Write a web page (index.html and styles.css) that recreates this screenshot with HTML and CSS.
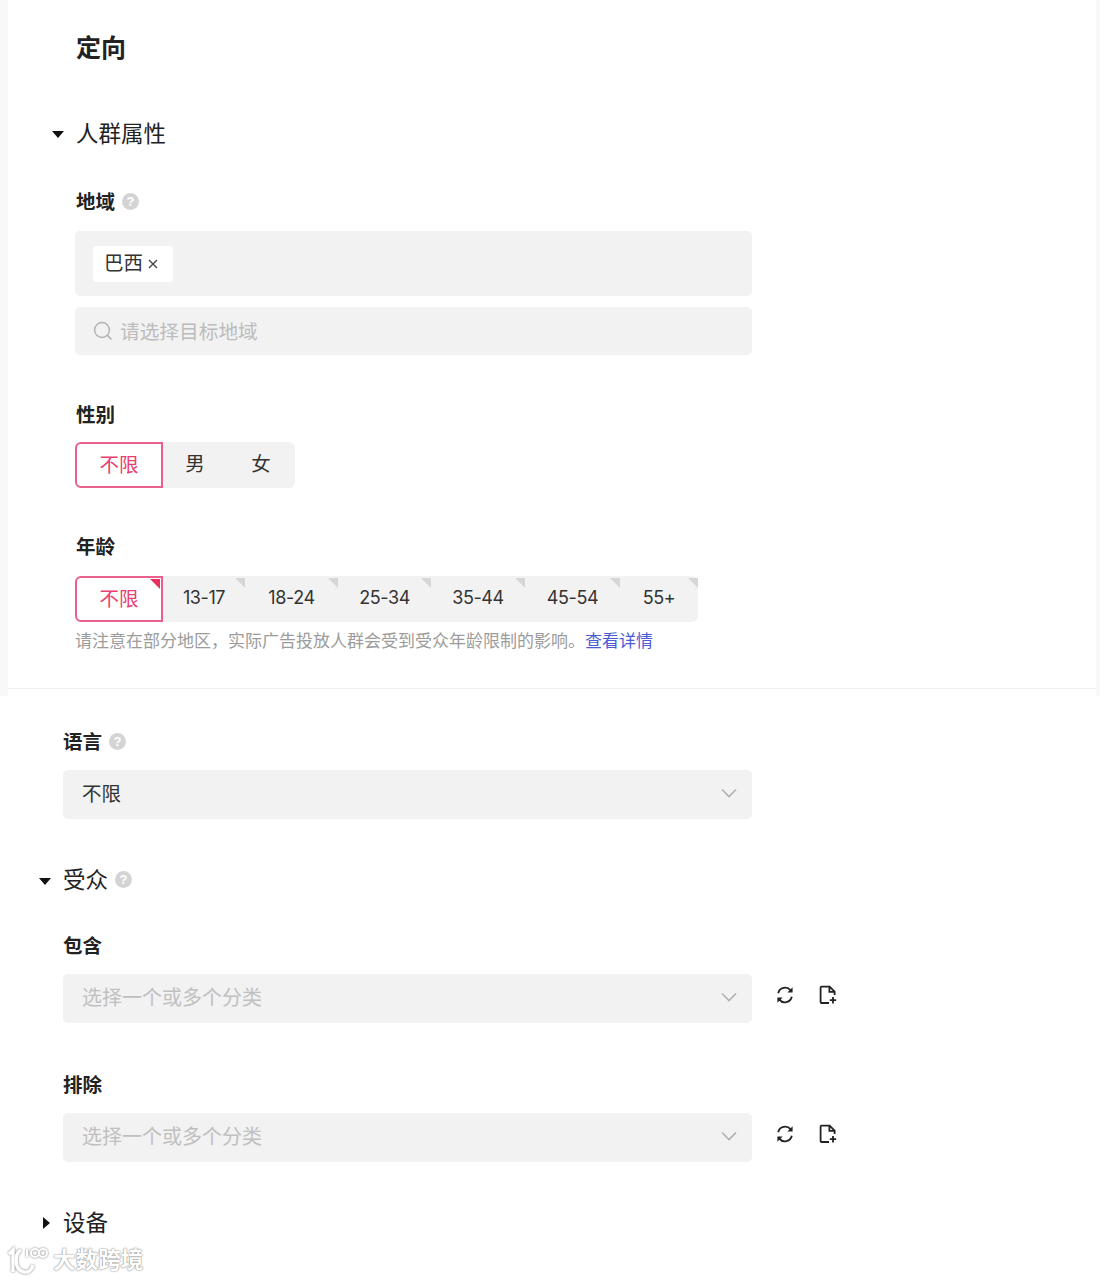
FILE: index.html
```html
<!doctype html>
<html lang="zh-CN">

  <head>
    <meta charset="utf-8">
    <meta name="viewport" content="width=device-width, initial-scale=1">
    <title>定向</title>
    <link rel="stylesheet" href="styles.css">
  </head>

  <body>
    <section class="panel">
      <div class="panel-inner">
        <h1>定向</h1>
        <h2 class="group first"><span class="caret down"></span>人群属性</h2>

        <div class="label region-label">地域 <span class="help">?</span></div>
        <div class="tag-box">
          <span class="tag">巴西<svg class="tag-x" viewBox="0 0 12 12"><path d="M2 2l8 8M10 2l-8 8"/></svg></span>
        </div>
        <div class="search">
          <svg class="search-icon" viewBox="0 0 20 20"><circle cx="9" cy="9" r="7.4"/><path d="M14.4 14.4l4 4"/></svg>
          请选择目标地域
        </div>

        <div class="label gender-label">性别</div>
        <div class="segments">
          <span class="seg selected gender-all">不限</span>
          <span class="seg gender">男</span>
          <span class="seg gender">女</span>
        </div>

        <div class="label age-label">年龄</div>
        <div class="segments">
          <span class="seg selected gender-all corner">不限</span>
          <span class="seg age corner age-82">13-17</span>
          <span class="seg age corner age-93">18-24</span>
          <span class="seg age corner age-93">25-34</span>
          <span class="seg age corner age-94">35-44</span>
          <span class="seg age corner age-95">45-54</span>
          <span class="seg age corner age-78">55+</span>
        </div>
        <p class="note">请注意在部分地区，实际广告投放人群会受到受众年龄限制的影响。<a href="#">查看详情</a></p>
      </div>
    </section>

    <section class="rest">
      <div class="label lang-label">语言 <span class="help">?</span></div>
      <div class="select filled">不限
        <svg class="chevron" viewBox="0 0 16 10"><path d="M1 1.5l7 7 7-7"/></svg>
      </div>

      <h2 class="group audience"><span class="caret down"></span>受众 <span class="help">?</span></h2>

      <div class="label include-label">包含</div>
      <div class="select-row">
        <div class="select">选择一个或多个分类
          <svg class="chevron" viewBox="0 0 16 10"><path d="M1 1.5l7 7 7-7"/></svg>
        </div>
        <svg class="tool refresh" viewBox="0 0 20 20"><path d="M3.2 8.2A7 7 0 0 1 15.6 5.4M16.8 11.8A7 7 0 0 1 4.4 14.6"/><path class="solid" d="M17.6 2.2v5.4h-5.2zM2.4 17.8v-5.4h5.2z"/></svg>
        <svg class="tool file" viewBox="0 0 20 20"><path d="M11 18H3.6a1 1 0 0 1-1-1V2.6a1 1 0 0 1 1-1h8l5 5V10"/><path d="M11.4 1.8v5h5M15 12v6.4M11.8 15.2h6.4"/></svg>
      </div>

      <div class="label exclude-label">排除</div>
      <div class="select-row">
        <div class="select">选择一个或多个分类
          <svg class="chevron" viewBox="0 0 16 10"><path d="M1 1.5l7 7 7-7"/></svg>
        </div>
        <svg class="tool refresh" viewBox="0 0 20 20"><path d="M3.2 8.2A7 7 0 0 1 15.6 5.4M16.8 11.8A7 7 0 0 1 4.4 14.6"/><path class="solid" d="M17.6 2.2v5.4h-5.2zM2.4 17.8v-5.4h5.2z"/></svg>
        <svg class="tool file" viewBox="0 0 20 20"><path d="M11 18H3.6a1 1 0 0 1-1-1V2.6a1 1 0 0 1 1-1h8l5 5V10"/><path d="M11.4 1.8v5h5M15 12v6.4M11.8 15.2h6.4"/></svg>
      </div>

      <h2 class="group device"><span class="caret right"></span>设备</h2>
    </section>

    <div class="watermark">
      <svg class="wm-logo" viewBox="0 0 42 32">
        <path d="M1 11l4-4v22"/>
        <path d="M13 7C6 11 6 27 16 29c5 1 8-3 9-7"/>
        <path class="wm-thin" d="M19 14V6"/>
        <circle class="wm-thin" cx="27" cy="10" r="4"/>
        <circle class="wm-thin" cx="35" cy="10" r="4"/>
      </svg>
      <span class="wm-text">大数跨境</span>
    </div>
  </body>

</html>
```

FILE: styles.css
```css
html,
body {
  margin: 0;
  padding: 0;
  height: 1280px;
  overflow: hidden;
  background: #fff;
}

body {
  position: relative;
  font-family: "Noto Sans CJK SC", "Liberation Sans", sans-serif;
  color: #222;
}

.panel {
  height: 696px;
  box-sizing: border-box;
  background: #f8f8f8;
  padding: 0 4px 0 8px;
}

.panel-inner {
  height: 696px;
  background: #fff;
  padding-left: 68px;
  box-sizing: border-box;
  overflow: hidden;
  background-image: linear-gradient(#f1f1f1, #f1f1f1);
  background-repeat: no-repeat;
  background-size: 100% 1px;
  background-position: 0 688px;
}

h1 {
  margin: 0;
  padding-top: 28px;
  font-size: 25px;
  line-height: 36px;
  font-weight: 700;
}

.group {
  display: flex;
  align-items: center;
  margin: 0;
  font-size: 22.5px;
  line-height: 32px;
  font-weight: 400;
  position: relative;
}

.group.first {
  margin-top: 52px;
}

.caret {
  position: absolute;
  left: -24px;
  width: 0;
  height: 0;
}

.caret.down {
  top: 15px;
  border-left: 6.5px solid transparent;
  border-right: 6.5px solid transparent;
  border-top: 7px solid #111;
}

.caret.right {
  left: -20px;
  top: 12px;
  border-top: 6.5px solid transparent;
  border-bottom: 6.5px solid transparent;
  border-left: 7px solid #111;
}

.label {
  display: flex;
  align-items: center;
  gap: 7px;
  font-size: 19.5px;
  line-height: 28px;
  font-weight: 700;
}

.help {
  width: 17px;
  height: 17px;
  border-radius: 50%;
  background: #d4d4d4;
  color: #fff;
  font-family: "Liberation Sans", sans-serif;
  font-size: 13px;
  line-height: 17px;
  font-weight: 700;
  text-align: center;
}

.region-label {
  margin-top: 39px;
}

.tag-box {
  width: 677px;
  height: 65px;
  margin-top: 16px;
  margin-left: -1px;
  padding: 15px 18px;
  box-sizing: border-box;
  background: #f2f2f2;
  border-radius: 5px;
}

.tag {
  display: inline-flex;
  align-items: center;
  width: 80px;
  height: 36px;
  padding: 0 0 6px 11px;
  box-sizing: border-box;
  background: #fff;
  border-radius: 4px;
  font-size: 19.5px;
  color: #333;
}

.tag-x {
  width: 12px;
  height: 12px;
  margin: 6px 0 0 4px;
  fill: none;
  stroke: #444;
  stroke-width: 1.4;
}

.search {
  display: flex;
  align-items: center;
  width: 677px;
  height: 48px;
  margin-top: 11px;
  margin-left: -1px;
  padding: 0 0 2px 18px;
  box-sizing: border-box;
  background: #f2f2f2;
  border-radius: 5px;
  font-size: 19.7px;
  color: #bcbcbc;
}

.search-icon {
  width: 20px;
  height: 20px;
  margin: 2px 7px 0 0;
  fill: none;
  stroke: #b4b4b4;
  stroke-width: 1.5;
}

.gender-label {
  margin-top: 45px;
}

.age-label {
  margin-top: 44px;
}

.segments {
  display: inline-flex;
  margin-top: 14px;
  margin-left: -1px;
  height: 46px;
  background: #f2f2f2;
  border-radius: 6px;
  vertical-align: top;
}

.age-label + .segments {
  margin-top: 16px;
}

.seg {
  position: relative;
  display: flex;
  align-items: center;
  justify-content: center;
  box-sizing: border-box;
  padding-bottom: 5px;
  font-size: 19.5px;
  color: #333;
}

.seg.selected {
  width: 88px;
  padding-bottom: 4px;
  background: #fff;
  border: 2px solid #e9608a;
  border-radius: 6px 0 0 6px;
  color: #e8406f;
}

.seg.gender {
  width: 66px;
  padding-right: 2px;
}

.seg.age {
  padding-bottom: 4px;
  font-family: Inter, "Liberation Sans", sans-serif;
  font-size: 18px;
  letter-spacing: -.4px;
}

.age-82 { width: 82px; }
.age-93 { width: 93px; }
.age-94 { width: 94px; }
.age-95 { width: 95px; }
.age-78 { width: 78px; }

.corner::after {
  content: "";
  position: absolute;
  top: 2px;
  right: 0;
  border-top: 10px solid #d6d6d6;
  border-left: 10px solid transparent;
}

.seg.selected.corner::after {
  top: 1px;
  right: 1px;
  border-top-color: #e8305f;
}

.note {
  margin: 6px 0 0 -1px;
  font-size: 17px;
  line-height: 24px;
  color: #9c9c9c;
}

.note a {
  color: #4a5bd4;
  text-decoration: none;
}

.rest {
  padding-left: 63px;
}

.lang-label {
  margin-top: 31px;
}

.select {
  position: relative;
  display: flex;
  align-items: center;
  width: 689px;
  height: 49px;
  padding: 0 0 4px 19px;
  box-sizing: border-box;
  background: #f2f2f2;
  border-radius: 5px;
  font-size: 20px;
  color: #c0c0c0;
}

.lang-label + .select {
  margin-top: 15px;
}

.select.filled {
  font-size: 19.5px;
  color: #333;
}

.chevron {
  position: absolute;
  right: 15px;
  top: 18px;
  width: 16px;
  height: 10px;
  fill: none;
  stroke: #b0b0b0;
  stroke-width: 1.6;
}

.audience {
  margin-top: 43px;
  gap: 7px;
}

.audience .help {
  margin-top: 2px;
}

.audience .caret.down {
  top: 16px;
}

.include-label {
  margin-top: 37px;
  height: 28px;
}

.exclude-label {
  margin-top: 47px;
}

.select-row {
  display: flex;
  align-items: center;
  margin-top: 15px;
  height: 49px;
}

.tool {
  width: 20px;
  height: 20px;
  margin-top: -7px;
  fill: none;
  stroke: #222;
  stroke-width: 1.8;
}

.tool .solid {
  fill: #222;
  stroke: none;
}

.refresh {
  margin-left: 23px;
}

.file {
  margin-left: 23px;
}

.device {
  margin-top: 43px;
}

.watermark {
  position: absolute;
  left: 8px;
  top: 1243px;
  display: flex;
  align-items: center;
  gap: 3px;
}

.wm-logo {
  width: 42px;
  height: 32px;
  fill: none;
  stroke: #fff;
  stroke-width: 3.4;
  filter: drop-shadow(0 0 1px #777);
}

.wm-logo .wm-thin {
  stroke-width: 2;
}

.wm-text {
  font-size: 22.6px;
  line-height: 32px;
  font-weight: 700;
  color: #fff;
  text-shadow: 0 0 2px #8a8a8a, 0 0 1px #8a8a8a;
}
```
